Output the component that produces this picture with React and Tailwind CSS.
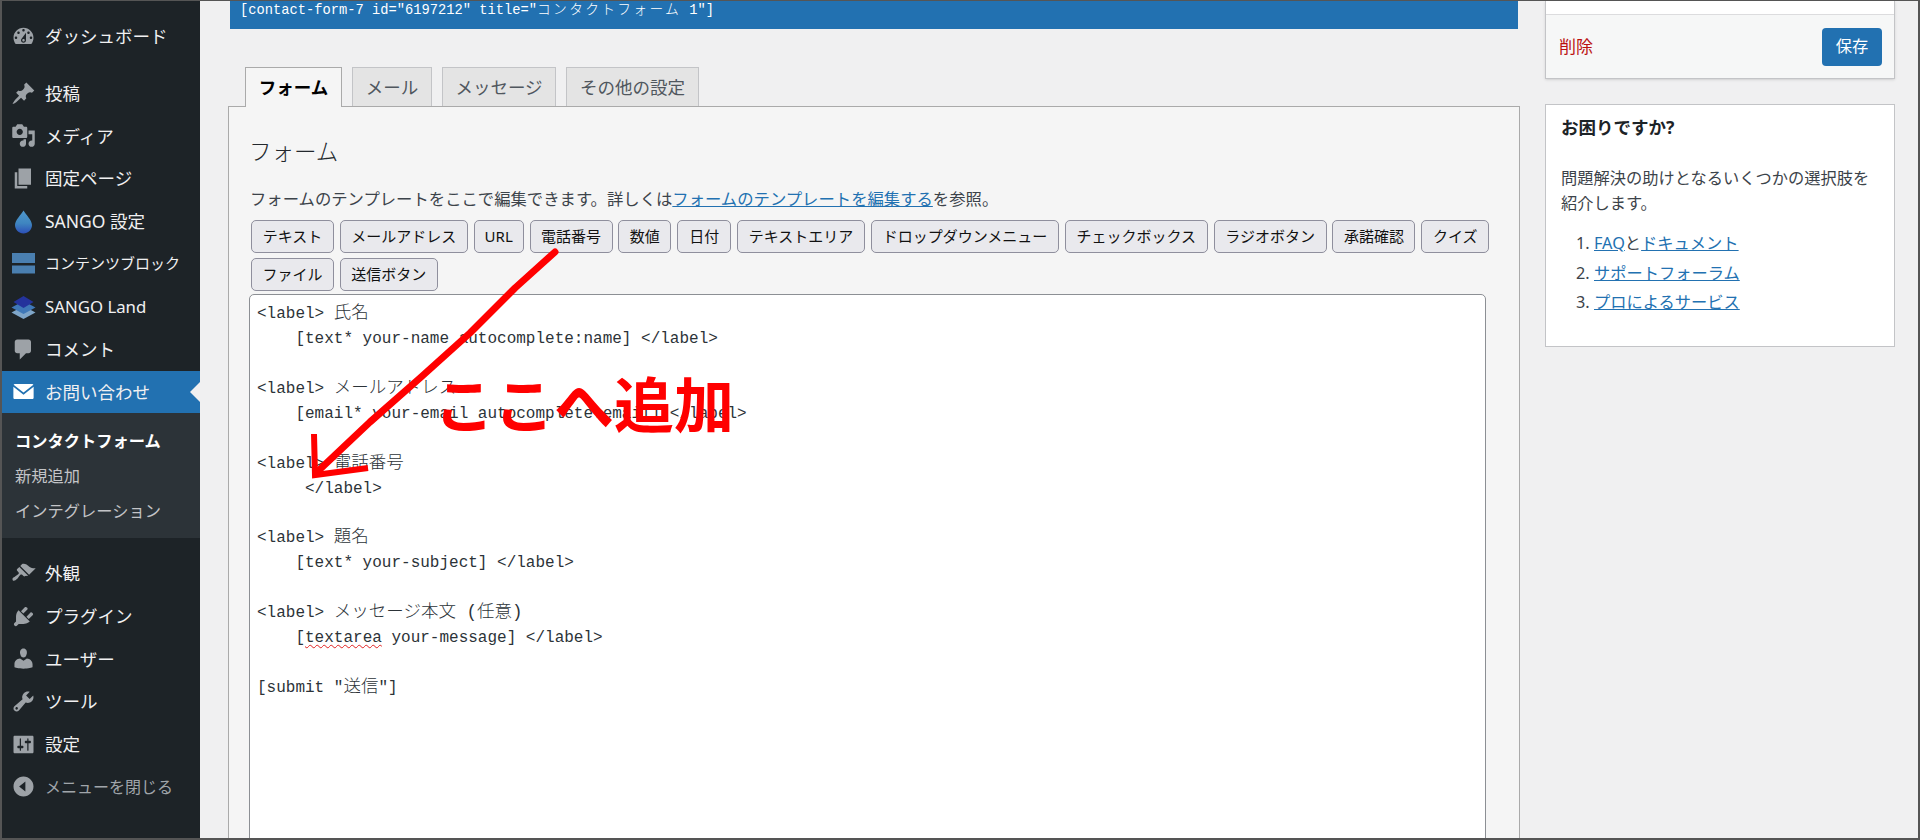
const Dash = ({ d, className = 'fill-[#9da2a7]' }) => (
  <svg viewBox="0 0 20 20" className={`w-[25px] h-[25px] shrink-0 ${className}`}>
    <path d={d} />
  </svg>
);

const icons = {
  dashboard: 'M3.76 16h12.48c1.1-1.37 1.76-3.11 1.76-5 0-4.42-3.58-8-8-8s-8 3.58-8 8c0 1.89.66 3.63 1.76 5zM10 4c.55 0 1 .45 1 1s-.45 1-1 1-1-.45-1-1 .45-1 1-1zM6 6c.55 0 1 .45 1 1s-.45 1-1 1-1-.45-1-1 .45-1 1-1zm8 0c.55 0 1 .45 1 1s-.45 1-1 1-1-.45-1-1 .45-1 1-1zm-5.37 5.55L12 7v6c0 1.1-.9 2-2 2s-2-.9-2-2c0-.57.24-1.08.63-1.45zM4 10c.55 0 1 .45 1 1s-.45 1-1 1-1-.45-1-1 .45-1 1-1zm12 0c.55 0 1 .45 1 1s-.45 1-1 1-1-.45-1-1 .45-1 1-1zm-5 3c0-.55-.45-1-1-1s-1 .45-1 1 .45 1 1 1 1-.45 1-1z',
  post: 'M10.44 3.02l1.82-1.82 6.36 6.35-1.83 1.82c-1.05-.68-2.48-.57-3.41.36l-.75.75c-.92.93-1.04 2.35-.35 3.41l-1.83 1.82-2.41-2.41-2.8 2.79c-.42.42-3.38 2.71-3.8 2.29s1.86-3.39 2.28-3.81l2.79-2.79L4.1 9.36l1.83-1.82c1.05.69 2.48.57 3.4-.36l.75-.75c.93-.92 1.05-2.35.36-3.41z',
  media: 'M13 11V4c0-.55-.45-1-1-1h-1.67L9 1H5L3.67 3H2c-.55 0-1 .45-1 1v7c0 .55.45 1 1 1h10c.55 0 1-.45 1-1zM7 4.5c1.38 0 2.5 1.12 2.5 2.5S8.38 9.5 7 9.5 4.5 8.38 4.5 7 5.62 4.5 7 4.5zM14 6h5v10.5c0 1.38-1.12 2.5-2.5 2.5S14 17.88 14 16.5s1.12-2.5 2.5-2.5c.17 0 .34.02.5.05V9h-3V6zm-4 8.05V13h2v3.5c0 1.38-1.12 2.5-2.5 2.5S7 17.88 7 16.5 8.12 14 9.5 14c.17 0 .34.02.5.05z',
  page: 'M6 15V2h10v13H6zm-1 1h8v2H3V5h2v11z',
  comment: 'M5 2h9c1.1 0 2 .9 2 2v7c0 1.1-.9 2-2 2h-2l-5 5v-5H5c-1.1 0-2-.9-2-2V4c0-1.1.9-2 2-2z',
  mail: 'M3 4h14c.4 0 .7.2.9.5L10 10.700 2.100 4.500C2.300 4.200 2.600 4 3 4zM1.900 6.200L10 12.500l8.100-6.300V15c0 .6-.5 1-1 1H2.900c-.5 0-1-.4-1-1z',
  appearance: 'M14.48 11.06L7.41 3.99l1.5-1.5c.5-.56 2.3-.47 3.51.32 1.21.8 1.43 1.28 2.91 2.1 1.18.64 2.45 1.26 4.45.85zm-.71.71L6.7 4.7 4.93 6.47c-.39.39-.39 1.02 0 1.41l1.06 1.06c.39.39.39 1.03 0 1.42-.6.6-1.43 1.11-2.21 1.69-.35.26-.7.53-1.01.84C1.43 13.23.65 14.55 1.5 15.5c.84.84 2.15.07 3.48-1.26.31-.31.58-.66.84-1.01.58-.78 1.09-1.61 1.69-2.21.39-.39 1.02-.39 1.41 0l1.06 1.06c.39.39 1.02.39 1.41 0z',
  plugin: 'M13.11 4.36L9.87 7.6 8 5.73l3.24-3.24c.35-.34 1.05-.2 1.56.32.52.51.66 1.21.31 1.55zm-8 1.77l.91-1.12 9.01 9.01-1.19.84c-.71.71-2.63 1.16-3.82 1.16H6.14L4.9 17.26c-.59.59-1.54.59-2.12 0-.59-.58-.59-1.53 0-2.12l1.24-1.24v-3.88c0-1.13.4-3.19 1.09-3.89zm7.26 3.97l3.24-3.24c.34-.35 1.04-.21 1.55.31.52.51.66 1.21.31 1.55l-3.24 3.25z',
  users: 'M10 9.25c-2.27 0-2.73-3.44-2.73-3.44C7 4.02 7.82 2 9.97 2c2.16 0 2.98 2.02 2.71 3.81 0 0-.41 3.44-2.68 3.44zm0 2.57L12.72 10c2.39 0 4.52 2.33 4.52 4.53v2.49s-3.65 1.13-7.24 1.13c-3.65 0-7.24-1.13-7.24-1.13v-2.49c0-2.25 1.94-4.48 4.47-4.48z',
  tools: 'M16.68 9.77c-1.34 1.34-3.3 1.67-4.95.99l-5.41 6.52c-.99.99-2.59.99-3.58 0s-.99-2.59 0-3.57l6.52-5.42c-.68-1.65-.35-3.61.99-4.95 1.28-1.28 3.12-1.62 4.72-1.06l-2.89 2.89 2.82 2.82 2.86-2.87c.53 1.58.18 3.39-1.08 4.65zM3.81 16.21c.4.39 1.04.39 1.43 0 .4-.4.4-1.04 0-1.43-.39-.4-1.03-.4-1.43 0-.39.39-.39 1.03 0 1.43z',
  settings: 'M18 16V4c0-.55-.45-1-1-1H3c-.55 0-1 .45-1 1v12c0 .55.45 1 1 1h14c.55 0 1-.45 1-1zM8 11h1c.55 0 1 .45 1 1s-.45 1-1 1H8v1.5c0 .28-.22.5-.5.5s-.5-.22-.5-.5V13H6c-.55 0-1-.45-1-1s.45-1 1-1h1V5.5c0-.28.22-.5.5-.5s.5.22.5.5V11zm5-2h-1c-.55 0-1-.45-1-1s.45-1 1-1h1V5.5c0-.28.22-.5.5-.5s.5.22.5.5V7h1c.55 0 1 .45 1 1s-.45 1-1 1h-1v5.5c0 .28-.22.5-.5.5s-.5-.22-.5-.5V9z',
  collapse: 'M18 10c0-4.42-3.58-8-8-8s-8 3.58-8 8 3.58 8 8 8 8-3.58 8-8zm-6.5-4v8l-5-4z',
};

const SangoDrop = () => (
  <svg viewBox="0 0 25 25" className="w-[25px] h-[25px] shrink-0">
    <defs>
      <linearGradient id="drop" x1="0" y1="0" x2="0" y2="1">
        <stop offset="0" stopColor="#4f97cc" />
        <stop offset="0.55" stopColor="#3f86c0" />
        <stop offset="1" stopColor="#2c4fb8" />
      </linearGradient>
    </defs>
    <path d="M12.500 1.500c2.200 4 8.500 9.600 8.500 14.600 0 4.600-3.800 8.400-8.500 8.400S4 20.700 4 16.100c0-5 6.300-10.600 8.500-14.600z" fill="url(#drop)" />
  </svg>
);

const BlockBars = () => (
  <svg viewBox="0 0 25 25" className="w-[25px] h-[25px] shrink-0">
    <rect x="1" y="2" width="23" height="10" fill="#4a7fb0" />
    <rect x="1" y="14.500" width="23" height="8" fill="#4a7fb0" />
  </svg>
);

const SangoLand = () => (
  <svg viewBox="0 0 25 25" className="w-[25px] h-[25px] shrink-0">
    <path d="M12.500 12l12 6.500-12 6.500-12-6.500z" fill="#7fa6c9" />
    <path d="M12.500 7l12 6.500-12 6.500-12-6.500z" fill="#3f78b8" />
    <path d="M12.500 2l10 6-10 6-10-6z" fill="#24339c" />
  </svg>
);

const Item = ({ icon, label, text = 'text-[17.5px]', active, dim }) => (
  <div className={`relative flex items-center h-[42.7px] pl-[9px] ${active ? 'bg-[#2271b1]' : ''}`}>
    {icon}
    <span className={`ml-[9px] whitespace-nowrap ${text} ${dim ? 'text-[#a0a5aa]' : 'text-[#f0f0f1]'}`}>{label}</span>
    {active && (
      <span className="absolute right-0 top-[11px] w-0 h-0 border-y-[10px] border-y-transparent border-r-[10px] border-r-[#f0f0f1]" />
    )}
  </div>
);

const Sidebar = () => (
  <aside className="w-[198px] shrink-0 bg-[#1d2327] pt-[14px]">
    <Item icon={<Dash d={icons.dashboard} />} label="ダッシュボード" />
    <div className="h-[14px]" />
    <Item icon={<Dash d={icons.post} />} label="投稿" />
    <Item icon={<Dash d={icons.media} />} label="メディア" />
    <Item icon={<Dash d={icons.page} />} label="固定ページ" />
    <Item icon={<SangoDrop />} label="SANGO 設定" />
    <Item icon={<BlockBars />} label="コンテンツブロック" text="text-[15px] -translate-y-px" />
    <Item icon={<SangoLand />} label="SANGO Land" text="text-[16.800px]" />
    <Item icon={<Dash d={icons.comment} />} label="コメント" />
    <Item icon={<Dash d={icons.mail} className="fill-white" />} label="お問い合わせ" active />
    <div className="bg-[#2c3338] pt-[10px] pb-[10px] pl-[13px] text-[16.25px]">
      <div className="h-[35px] flex items-center font-bold text-white">コンタクトフォーム</div>
      <div className="h-[35px] flex items-center text-[#c3c4c7]">新規追加</div>
      <div className="h-[35px] flex items-center text-[#c3c4c7]">インテグレーション</div>
    </div>
    <div className="h-[14px]" />
    <Item icon={<Dash d={icons.appearance} />} label="外観" />
    <Item icon={<Dash d={icons.plugin} />} label="プラグイン" />
    <Item icon={<Dash d={icons.users} />} label="ユーザー" />
    <Item icon={<Dash d={icons.tools} />} label="ツール" />
    <Item icon={<Dash d={icons.settings} />} label="設定" />
    <Item icon={<Dash d={icons.collapse} />} label="メニューを閉じる" text="text-[16px]" dim />
  </aside>
);

const tags = [
  ['テキスト', 'w-[83px]'],
  ['メールアドレス', 'w-[128px]'],
  ['URL', 'w-[50px]'],
  ['電話番号', 'w-[83px]'],
  ['数値', 'w-[53px]'],
  ['日付', 'w-[54px]'],
  ['テキストエリア', 'w-[128px]'],
  ['ドロップダウンメニュー', 'w-[188px]'],
  ['チェックボックス', 'w-[143px]'],
  ['ラジオボタン', 'w-[113px]'],
  ['承諾確認', 'w-[83px]'],
  ['クイズ', 'w-[68px]'],
  ['ファイル', 'w-[83px]'],
  ['送信ボタン', 'w-[98px]'],
];

const Cjk = ({ children }) => <span className="text-[17.5px] leading-[0px] font-light">{children}</span>;

const FormCode = () => (
  <pre className="font-['Liberation_Mono','Noto_Sans_CJK_JP',monospace] text-[16px] leading-[24.93px] text-[#2c3338]">
    {'<label> '}<Cjk>氏名</Cjk>{'\n'}
    {'    [text* your-name autocomplete:name] </label>\n\n'}
    {'<label> '}<Cjk>メールアドレス</Cjk>{'\n'}
    {'    [email* your-email autocomplete:email] </label>\n\n'}
    {'<label> '}<Cjk>電話番号</Cjk>{'\n'}
    {'     </label>\n\n'}
    {'<label> '}<Cjk>題名</Cjk>{'\n'}
    {'    [text* your-subject] </label>\n\n'}
    {'<label> '}<Cjk>メッセージ本文 (任意)</Cjk>{'\n'}
    {'    ['}
    <span className="underline decoration-wavy decoration-[#e02020] decoration-1 underline-offset-2">textarea</span>
    {' your-message] </label>\n\n'}
    {'[submit "'}<Cjk>送信</Cjk>{'"]'}
  </pre>
);

const Tab = ({ label, active }) => (
  <div
    className={`h-[39px] flex items-center justify-center border border-b-0 text-[17.5px] ${
      active
        ? 'relative z-10 w-[97px] h-[40px] -mb-px bg-[#f5f5f5] border-[#aaaaaa] font-bold text-black'
        : label === 'メール'
          ? 'w-[80px] bg-[#e4e4e4] border-[#c3c4c7] text-[#50575e]'
          : label === 'メッセージ'
            ? 'w-[114px] bg-[#e4e4e4] border-[#c3c4c7] text-[#50575e]'
            : 'w-[133px] bg-[#e4e4e4] border-[#c3c4c7] text-[#50575e]'
    }`}
  >
    {label}
  </div>
);

const Annotation = () => (
  <>
    <svg className="absolute -left-[2px] -top-px w-[1920px] h-[840px] pointer-events-none" viewBox="0 0 1920 840">
      <path d="M555 252 L515 288 L470 333 L420 378 L370 422 L316 473" fill="none" stroke="#ff0000" strokeWidth="7" strokeLinecap="round" strokeLinejoin="round" />
      <path d="M314 434 L315 475 L368 468" fill="none" stroke="#ff0000" strokeWidth="6" />
    </svg>
    <div className="absolute left-[432px] top-[364px] text-[60px] leading-[80px] font-bold text-[#ff0000] whitespace-nowrap">ここへ追加</div>
  </>
);

export default function App() {
  return (
    <div className="relative box-border w-[1920px] h-[840px] overflow-hidden flex border-l-2 border-t border-r-2 border-b-2 border-[#555555] bg-[#f0f0f1] font-['Noto_Sans','Noto_Sans_CJK_JP',sans-serif] text-[#3c434a]">
      <Sidebar />

      <main className="w-[1292px] ml-[28px] shrink-0 flex flex-col">
        <div className="ml-[2px] w-[1288px] h-[28px] bg-[#2271b1] pl-[10px] text-white font-['Liberation_Mono','Noto_Sans_CJK_JP',monospace] text-[13.75px] leading-[20px] whitespace-pre">
          {'[contact-form-7 id="6197212" title="'}
          <span className="tracking-[2.300px] font-light">コンタクトフォーム</span>
          {' 1"]'}
        </div>

        <div className="mt-[38px] ml-[17px] flex items-end gap-[10px]">
          <Tab label="フォーム" active />
          <Tab label="メール" />
          <Tab label="メッセージ" />
          <Tab label="その他の設定" />
        </div>

        <section className="flex-1 min-h-0 border border-b-0 border-[#aaaaaa] bg-[#f5f5f5] pl-[20px] overflow-hidden">
          <h2 className="mt-[29px] h-[32px] leading-[32px] text-[22.500px] font-light text-[#23282d]">フォーム</h2>
          <p className="mt-[19px] h-[25px] leading-[25px] ml-px text-[16.350px] whitespace-nowrap">
            フォームのテンプレートをここで編集できます。詳しくは
            <a className="text-[#2271b1] underline">フォームのテンプレートを編集する</a>
            を参照。
          </p>
          <div className="mt-[8px] ml-[2px] w-[1270px] flex flex-wrap gap-x-[5.850px] gap-y-[5px]">
            {tags.map(([label, width]) => (
              <button key={label} className={`${width} h-[33px] bg-[#e9e9ed] border border-[#8f8f9d] rounded-[5px] text-[15px] text-[#111111] whitespace-nowrap`}>
                {label}
              </button>
            ))}
          </div>
          <div className="mt-[3px] w-[1237px] h-[600px] bg-white border border-[#8c8f94] rounded-[5px] pl-[7px] pt-[7px]">
            <FormCode />
          </div>
        </section>
      </main>

      <aside className="w-[350px] ml-[25px] shrink-0">
        <div className="border border-t-0 border-[#c3c4c7] bg-white shadow-sm">
          <div className="h-[13px]" />
          <div className="h-[64px] border-t border-[#dcdcde] bg-[#f6f7f7] flex items-center justify-between pl-[13px] pr-[12px]">
            <a className="text-[#bb1111] text-[17px]">削除</a>
            <button className="w-[60px] h-[38px] rounded-[4px] bg-[#2271b1] text-white text-[16.25px]">保存</button>
          </div>
        </div>

        <div className="mt-[25px] border border-[#c3c4c7] bg-white pl-[15px] pr-[15px] h-[243px]">
          <h3 className="mt-[9px] h-[26px] leading-[26px] text-[17.5px] font-bold text-[#1d2327]">お困りですか?</h3>
          <p className="mt-[26px] text-[16.25px] leading-[25px]">問題解決の助けとなるいくつかの選択肢を紹介します。</p>
          <ol className="mt-[13px] ml-[15px] text-[16.25px] leading-[29.500px]">
            <li><span className="inline-block w-[18px]">1.</span><a className="text-[#2271b1] underline">FAQ</a>と<a className="text-[#2271b1] underline">ドキュメント</a></li>
            <li><span className="inline-block w-[18px]">2.</span><a className="text-[#2271b1] underline">サポートフォーラム</a></li>
            <li><span className="inline-block w-[18px]">3.</span><a className="text-[#2271b1] underline">プロによるサービス</a></li>
          </ol>
        </div>
      </aside>

      <Annotation />
    </div>
  );
}
